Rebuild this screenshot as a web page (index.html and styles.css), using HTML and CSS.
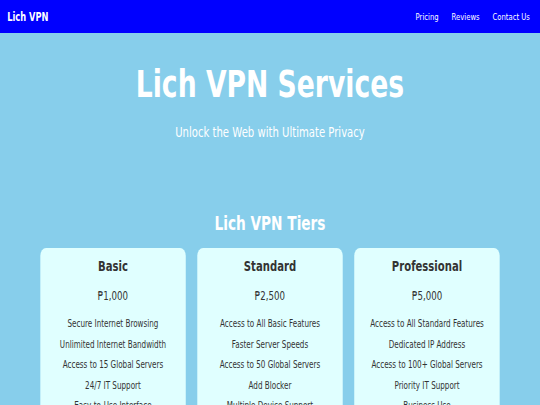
FILE: index.html
```html
<html>

<head>
    <link rel="stylesheet" href="styles.css">
</head>

<body>
    <div class="page">
        <div class="navbar">
            <span class="brand">Lich VPN</span>
            <div class="links">
                <a href="#pricing">Pricing</a>
                <a href="#reviews">Reviews</a>
                <a href="#contact">Contact Us</a>
            </div>
        </div>

        <div class="hero">
            <h1>Lich VPN Services</h1>
            <p class="tagline">Unlock the Web with Ultimate Privacy</p>
        </div>

        <div class="pricing" id="pricing">
            <h2>Lich VPN Tiers</h2>
            <div class="tiers">
                <div class="tier">
                    <h3>Basic</h3>
                    <p class="price">&#8369;1,000</p>
                    <ul>
                        <li>Secure Internet Browsing</li>
                        <li>Unlimited Internet Bandwidth</li>
                        <li>Access to 15 Global Servers</li>
                        <li>24/7 IT Support</li>
                        <li>Easy-to-Use Interface</li>
                    </ul>
                </div>
                <div class="tier">
                    <h3>Standard</h3>
                    <p class="price">&#8369;2,500</p>
                    <ul>
                        <li>Access to All Basic Features</li>
                        <li>Faster Server Speeds</li>
                        <li>Access to 50 Global Servers</li>
                        <li>Add Blocker</li>
                        <li>Multiple Device Support</li>
                    </ul>
                </div>
                <div class="tier">
                    <h3>Professional</h3>
                    <p class="price">&#8369;5,000</p>
                    <ul>
                        <li>Access to All Standard Features</li>
                        <li>Dedicated IP Address</li>
                        <li>Access to 100+ Global Servers</li>
                        <li>Priority IT Support</li>
                        <li>Business Use</li>
                    </ul>
                </div>
            </div>
        </div>
    </div>
</body>

</html>
```

FILE: styles.css
```css
body {
    margin: 0;
    background-color: #87CEEB;
    color: white;
    font-family: "DejaVu Sans", Verdana, sans-serif;
    overflow-x: hidden;
}

/* narrow look of the page: laid out at 750px, drawn at 540px */
.page {
    width: 750px;
    transform: scaleX(0.72);
    transform-origin: 0 0;
}

a {
    text-decoration: none;
    color: white;
}

.navbar {
    display: flex;
    justify-content: space-between;
    align-items: center;
    height: 33px;
    padding: 0 14px 0 10px;
    background-color: #0000FF;
}

.brand {
    font-size: 11.5px;
    font-weight: bold;
}

.links {
    display: flex;
    gap: 18px;
    font-size: 9.5px;
}

.hero {
    text-align: center;
}

h1 {
    margin: 30px 0 0;
    font-size: 37px;
    line-height: 44px;
}

.tagline {
    margin: 16px 0 0;
    font-size: 14px;
    line-height: 18px;
}

.pricing {
    padding: 0 55.5px;
    text-align: center;
}

h2 {
    margin: 70px 0 13px;
    font-size: 19px;
    line-height: 24px;
}

.tiers {
    display: flex;
    gap: 15.3px;
}

.tier {
    flex: 1;
    padding: 8px 8px 10px;
    background: #E0FFFF;
    border-radius: 8px;
    color: #333;
}

h3 {
    margin: 0;
    font-size: 14px;
    line-height: 20px;
}

.price {
    margin: 12px 0 0;
    font-size: 12px;
    line-height: 16px;
}

ul {
    margin: 10px 0 0;
    padding: 0;
    list-style: none;
    font-size: 10px;
    line-height: 20.5px;
}
```
